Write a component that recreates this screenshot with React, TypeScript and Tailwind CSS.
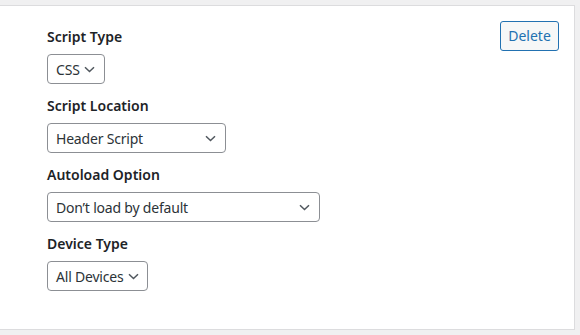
interface FieldProps {
  label: string
  value: string
  width: string
}

function Chevron() {
  return (
    <svg width="11" height="7" viewBox="0 0 11 7" fill="none" className="shrink-0">
      <path d="M1 1.2 L5.5 5.5 L10 1.2" stroke="#50575e" strokeWidth="1.5" />
    </svg>
  )
}

function SelectField({ label, value, width }: FieldProps) {
  return (
    <div className="flex flex-col">
      <label className="text-[14px] font-semibold leading-[22px] text-[#1d2327]">{label}</label>
      <div
        className={`mt-[6px] flex h-[30px] items-center justify-between gap-[4px] rounded-[4px] border border-[#8c8f94] bg-white pl-[8px] pr-[9px] text-[14px] tracking-[-0.2px] text-[#2c3338] ${width}`}
      >
        <span className="whitespace-nowrap">{value}</span>
        <Chevron />
      </div>
    </div>
  )
}

export default function App() {
  return (
    <div
      className="h-[335px] w-[580px] overflow-hidden bg-[#f0f0f1] pt-[5px]"
      style={{ fontFamily: '"Noto Sans", "Open Sans", sans-serif' }}
    >
      <div className="h-[325px] w-[575px] border-y border-r border-[#dcdcde] bg-white">
        <div className="flex items-start justify-between pl-[47px] pr-[15px] pt-[20px]">
          <div className="flex flex-col gap-[11px]">
            <SelectField label="Script Type" value="CSS" width="w-[58px]" />
            <SelectField label="Script Location" value="Header Script" width="w-[179px]" />
            <SelectField label="Autoload Option" value="Don’t load by default" width="w-[273px]" />
            <SelectField label="Device Type" value="All Devices" width="w-[101px]" />
          </div>
          <button
            type="button"
            className="mt-[-5px] flex h-[30px] w-[59px] items-center justify-center rounded-[3px] border border-[#2271b1] bg-[#f6f7f7] text-[14px] leading-none text-[#2271b1]"
          >
            Delete
          </button>
        </div>
      </div>
    </div>
  )
}
